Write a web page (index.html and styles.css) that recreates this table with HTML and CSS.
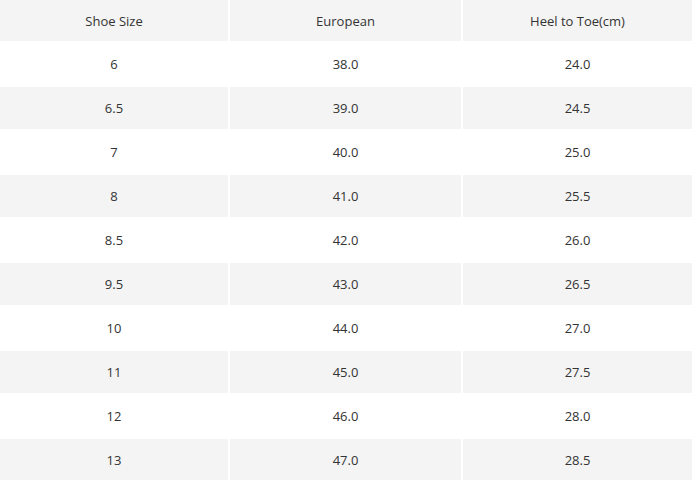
FILE: index.html
```html
<!DOCTYPE html>
<html lang="en">
<head>
<meta charset="utf-8">
<title>Size Chart</title>
<link rel="stylesheet" href="styles.css">
</head>
<body>
<div class="chart">
  <div class="row head"><div class="cell">Shoe Size</div><div class="cell">European</div><div class="cell">Heel to Toe(cm)</div></div>
  <div class="row"><div class="cell">6</div><div class="cell">38.0</div><div class="cell">24.0</div></div>
  <div class="row alt"><div class="cell">6.5</div><div class="cell">39.0</div><div class="cell">24.5</div></div>
  <div class="row"><div class="cell">7</div><div class="cell">40.0</div><div class="cell">25.0</div></div>
  <div class="row alt"><div class="cell">8</div><div class="cell">41.0</div><div class="cell">25.5</div></div>
  <div class="row"><div class="cell">8.5</div><div class="cell">42.0</div><div class="cell">26.0</div></div>
  <div class="row alt"><div class="cell">9.5</div><div class="cell">43.0</div><div class="cell">26.5</div></div>
  <div class="row"><div class="cell">10</div><div class="cell">44.0</div><div class="cell">27.0</div></div>
  <div class="row alt"><div class="cell">11</div><div class="cell">45.0</div><div class="cell">27.5</div></div>
  <div class="row"><div class="cell">12</div><div class="cell">46.0</div><div class="cell">28.0</div></div>
  <div class="row alt"><div class="cell">13</div><div class="cell">47.0</div><div class="cell">28.5</div></div>
</div>
</body>
</html>
```

FILE: styles.css
```css
html, body {
  margin: 0;
  padding: 0;
  background: #ffffff;
}

body {
  font-family: "Open Sans", "Liberation Sans", sans-serif;
  font-size: 13px;
  color: #333333;
  overflow: hidden;
}

.chart {
  display: flex;
  flex-direction: column;
  gap: 2px;
  width: 692px;
}

.row {
  display: grid;
  grid-template-columns: 228px 231px 229px;
  column-gap: 2px;
  height: 42px;
}

.row.head {
  height: 41px;
}

.cell {
  display: flex;
  align-items: center;
  justify-content: center;
  background: #ffffff;
}

.head .cell,
.alt .cell {
  background: #f4f4f4;
}
```
